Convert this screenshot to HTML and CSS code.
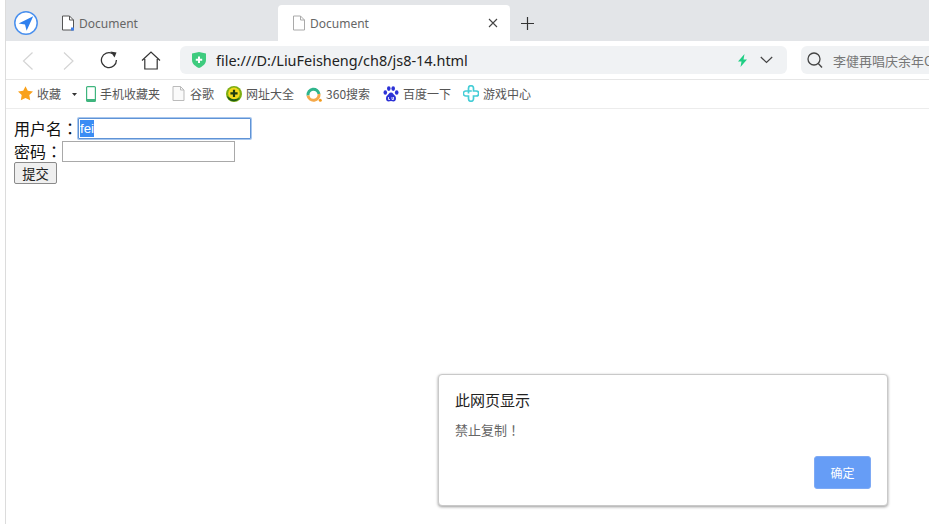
FILE: index.html
```html
<!DOCTYPE html>
<html lang="zh-CN">
<head>
<meta charset="utf-8">
<title>Document</title>
<link rel="stylesheet" href="styles.css">
</head>
<body>
<div class="browser">
  <div class="tabbar">
    <div class="logo">
      <svg width="26" height="26" viewBox="0 0 26 26"><circle cx="13" cy="13" r="11.2" fill="#fff" stroke="#4a90ee" stroke-width="1.5"/><path d="M20.2 6.2 5.6 13.4l6.4 1.2 1.6 6.2z" fill="#2f80ee"/></svg>
    </div>
    <div class="tab">
      <svg class="tab-icon" width="14" height="16" viewBox="0 0 14 16"><path d="M1.5 1h7l4 4v10h-11z" fill="#fff" stroke="#555" stroke-width="1"/><path d="M8.5 1v4h4" fill="none" stroke="#555"/><rect x="10" y="12.5" width="3" height="3" fill="#3d7de8"/></svg>
      <span class="tab-title">Document</span>
    </div>
    <div class="tab tab-active">
      <svg class="tab-icon" width="14" height="16" viewBox="0 0 14 16"><path d="M1.5 1h7l4 4v10h-11z" fill="#fff" stroke="#aaa" stroke-width="1"/><path d="M8.5 1v4h4" fill="none" stroke="#aaa"/></svg>
      <span class="tab-title">Document</span>
      <svg class="tab-close" width="10" height="10" viewBox="0 0 10 10"><path d="M1 1l8 8M9 1l-8 8" stroke="#444" stroke-width="1.1"/></svg>
    </div>
    <svg class="new-tab" width="15" height="15" viewBox="0 0 15 15"><path d="M7.5 1v13M1 7.5h13" stroke="#333" stroke-width="1.2"/></svg>
  </div>

  <div class="toolbar">
    <div class="nav-btn"><svg class="chev" width="14" height="20" viewBox="0 0 14 20"><path d="M11.500 1.500 2.500 10l9 8.500" fill="none" stroke="#d4d4d4" stroke-width="1.2"/></svg></div>
    <div class="nav-btn"><svg class="chev" width="14" height="20" viewBox="0 0 14 20"><path d="M2 1.500 11 10 2 18.500" fill="none" stroke="#d4d4d4" stroke-width="1.2"/></svg></div>
    <div class="nav-btn"><svg class="reload" width="18" height="18" viewBox="0 0 18 18"><path d="M12.600 2.600A7.500 7.500 0 1 0 16.400 9" fill="none" stroke="#333" stroke-width="1.300"/><path d="M10.500 .5l6 1-2 5z" fill="#333"/></svg></div>
    <div class="nav-btn"><svg width="20" height="19" viewBox="0 0 20 19"><path d="M1 9.500 10 1l9 8.500M3.800 8v10h12.400V8" fill="none" stroke="#333" stroke-width="1.200"/></svg></div>
    <div class="address">
      <svg class="shield" width="14" height="16" viewBox="0 0 14 16"><path d="M0 1.500 7 0l7 1.500V8c0 4-3.500 6.500-7 8-3.500-1.500-7-4-7-8z" fill="#3ecb7e"/><path d="M7 4.500v6.500M3.800 7.800h6.400" stroke="#fff" stroke-width="2"/></svg>
      <span class="url">file:///D:/LiuFeisheng/ch8/js8-14.html</span>
      <svg class="bolt" width="11" height="13" viewBox="0 0 11 13"><path d="M7.500 0 1 7.500h3.500L3.500 13 10 5.500H6.500z" fill="#1fce84"/></svg>
      <svg class="chevron" width="13" height="8" viewBox="0 0 13 8"><path d="M.8 1l5.700 5.500L12.200 1" fill="none" stroke="#444" stroke-width="1.200"/></svg>
    </div>
    <div class="search">
      <svg width="16" height="17" viewBox="0 0 16 17"><circle cx="7" cy="7" r="6" fill="none" stroke="#444" stroke-width="1.300"/><path d="M11.300 11.500 15 15.500" stroke="#444" stroke-width="1.300"/></svg>
      <span class="search-text">李健再唱庆余年OST</span>
    </div>
  </div>

  <div class="bookmarks">
    <div class="bm">
      <svg width="15" height="15" viewBox="0 0 15 15"><path d="M7.500 .3l2.300 4.500 5.200.7-3.700 3.600.9 5.200-4.700-2.400-4.700 2.400.9-5.200L0 5.500l5.200-.7z" fill="#f9a11b"/></svg>
      <span>收藏</span>
    </div>
    <svg class="caret" width="5" height="3" viewBox="0 0 5 3"><path d="M0 0h5L2.500 3z" fill="#333"/></svg>
    <div class="bm">
      <svg width="10" height="16" viewBox="0 0 10 16"><rect x=".6" y=".6" width="8.800" height="14.800" rx="1" fill="#fff" stroke="#3fb57e" stroke-width="1.200"/><path d="M.6 13h8.800v2.400H.6z" fill="#3fb57e"/></svg>
      <span>手机收藏夹</span>
    </div>
    <div class="bm bm-doc">
      <svg width="13" height="15" viewBox="0 0 13 15"><path d="M1 .5h7.500L12 4v10.500H1z" fill="#fafafa" stroke="#bbb"/><path d="M8.500 .5V4H12" fill="none" stroke="#bbb"/></svg>
      <span>谷歌</span>
    </div>
    <div class="bm">
      <svg width="16" height="16" viewBox="0 0 16 16"><circle cx="8" cy="8" r="8" fill="#7dae12"/><path d="M1 10a7 7 0 0 0 13 1.500C10 14 5 13.500 1 10z" fill="#1f5c14"/><circle cx="8" cy="7.400" r="5.800" fill="#f2d91c"/><path d="M8 3.800v7.200M4.400 7.400h7.200" stroke="#1e3d10" stroke-width="2.200"/></svg>
      <span>网址大全</span>
    </div>
    <div class="bm bm-wide">
      <svg width="16" height="16" viewBox="0 0 16 16"><path d="M2 9.500A5.500 5.500 0 0 1 13 8" fill="none" stroke="#2fb58c" stroke-width="3"/><path d="M13 8A5.500 5.500 0 0 1 2 9.500" fill="none" stroke="#f5a94a" stroke-width="3"/><circle cx="14.300" cy="14.300" r="1.500" fill="#f29b1d"/></svg>
      <span>360搜索</span>
    </div>
    <div class="bm">
      <svg width="16" height="16" viewBox="0 0 16 16"><g fill="#2c32d6"><ellipse cx="2.300" cy="6.500" rx="1.800" ry="2.300"/><ellipse cx="5.800" cy="2.600" rx="1.800" ry="2.400"/><ellipse cx="10.200" cy="2.600" rx="1.800" ry="2.400"/><ellipse cx="13.700" cy="6.500" rx="1.800" ry="2.300"/><path d="M8 6.500c-2 0-2.500 2-4 3.200C2.500 11 2.500 15.500 5.500 15.500c1 0 1.500-.4 2.500-.4s1.500.4 2.500.4c3 0 3-4.500 1.500-5.800C10.500 8.500 10 6.500 8 6.500z"/></g><path d="M5.500 11v2.500h1.500M9 11v2.500h1.500V11" fill="none" stroke="#fff" stroke-width=".8"/></svg>
      <span>百度一下</span>
    </div>
    <div class="bm">
      <svg width="16" height="17" viewBox="0 0 16 17"><path d="M5.500 8.500V3.200a2.500 2.500 0 0 1 5 0V6h2.700a2.500 2.500 0 0 1 0 5H10.500v2.800a2.500 2.500 0 0 1-5 0V11H2.800a2.500 2.500 0 0 1 0-5h6" fill="none" stroke="#45cdd6" stroke-width="1.700"/></svg>
      <span>游戏中心</span>
    </div>
  </div>

  <main class="content">
    <form class="login">
      <div class="row">用户名<span class="punct" lang="zh-TW">：</span><span class="field field-focus"><span class="selected">fei</span></span></div>
      <div class="row row-second">密码<span class="punct" lang="zh-TW">：</span><span class="field"></span></div>
      <div class="row"><button type="button" class="submit">提交</button></div>
    </form>
  </main>
</div>

<div class="dialog">
  <div class="dialog-title">此网页显示</div>
  <div class="dialog-msg">禁止复制<span class="punct" lang="zh-TW">！</span></div>
  <div class="dialog-actions"><button type="button" class="ok">确定</button></div>
</div>
</body>
</html>
```
FILE: styles.css
```css
* { box-sizing: border-box; }
html, body { margin: 0; height: 524px; overflow: hidden; background: #fff; }
body { font-family: "Noto Sans CJK SC", "Noto Sans", sans-serif; color: #222; position: relative; }
svg { display: block; flex-shrink: 0; }
.punct { font-family: "Noto Sans CJK TC", sans-serif; }

.browser { margin-left: 5px; border-left: 1px solid #dcdcdc; height: 524px; width: 924px; overflow: hidden; display: flex; flex-direction: column; }

.tabbar { height: 41px; background: #e3e5e8; display: flex; align-items: flex-end; flex-shrink: 0; }
.logo { width: 40px; height: 41px; padding: 10px 0 0 7px; flex-shrink: 0; }
.tab { width: 232px; height: 36px; padding: 0 12px 0 15px; display: flex; align-items: center; gap: 4px; font-family: "Noto Sans", sans-serif; font-size: 12px; color: #666; flex-shrink: 0; }
.tab-active { background: #fff; border-radius: 4px 4px 0 0; padding-left: 14px; }
.tab-title { flex: 1; }
.new-tab { margin: 0 0 10px 10px; }

.toolbar { height: 39px; padding: 5px 0 5px 1px; display: flex; align-items: stretch; border-bottom: 1px solid #e6e6e6; flex-shrink: 0; }
.nav-btn { width: 41px; display: flex; align-items: center; justify-content: center; flex-shrink: 0; }
.chev { margin-top: 2px; }
.reload { margin-right: 2px; }
.address { width: 607px; margin-left: 9px; background: #f0f2f4; border-radius: 6px; display: flex; align-items: center; padding: 0 14px 0 12px; flex-shrink: 0; }
.shield { margin-right: 10px; }
.url { flex: 1; font-family: "Noto Sans", sans-serif; font-size: 14.450px; color: #222; }
.bolt { margin-right: 12px; }
.search { width: 220px; margin-left: 14px; background: #f0f2f4; border-radius: 6px; display: flex; align-items: center; padding-left: 6px; gap: 10px; flex-shrink: 0; }
.search-text { font-size: 13px; color: #777; white-space: nowrap; }

.bookmarks { height: 29px; padding: 0 0 1px 12px; display: flex; align-items: center; border-bottom: 1px solid #ececec; flex-shrink: 0; font-size: 12px; color: #555; }
.bm { display: flex; align-items: center; gap: 4px; margin-right: 12px; white-space: nowrap; }
.bm-doc { gap: 5px; }
.bm-wide { margin-right: 13px; }
.caret { margin: 2px 9px 0 -1px; }

.content { flex: 1; padding: 8px; font-size: 16px; color: #111; }
.row { height: 22px; display: flex; align-items: center; line-height: 22px; }
.row-second { margin-top: 1px; }
.field { width: 173px; height: 21px; border: 1px solid #a9a9a9; background: #fff; display: flex; align-items: center; padding-left: 1px; font-family: "Liberation Sans", sans-serif; font-size: 13.300px; }
.field-focus { border-color: #5f93d6; box-shadow: 0 0 0 1px #a8c7ee; border-radius: 1px; }
.selected { background: #3a8cf4; color: #fff; line-height: 17px; }
.submit { width: 43px; height: 22px; padding: 0; border: 1px solid #8a8a8a; border-radius: 2px; background: #efefef; font-family: "Noto Sans CJK SC", sans-serif; font-size: 13.300px; color: #222; }

.dialog { position: absolute; left: 438px; top: 374px; width: 450px; height: 132px; padding: 15px 16px 16px 16px; background: #fff; border: 1px solid #c9c9c9; border-radius: 4px; box-shadow: 0 1px 3px rgba(0,0,0,.4); display: flex; flex-direction: column; }
.dialog-title { font-size: 15px; line-height: 20px; color: #222; }
.dialog-msg { margin-top: 11px; font-size: 13px; line-height: 18px; color: #666; }
.dialog-actions { margin-top: auto; display: flex; justify-content: flex-end; }
.ok { width: 57px; height: 33px; padding: 0; border: 1px solid #7eaaf5; border-radius: 3px; background: #669df6; color: #fff; font-family: "Noto Sans CJK SC", sans-serif; font-size: 12px; }
```
